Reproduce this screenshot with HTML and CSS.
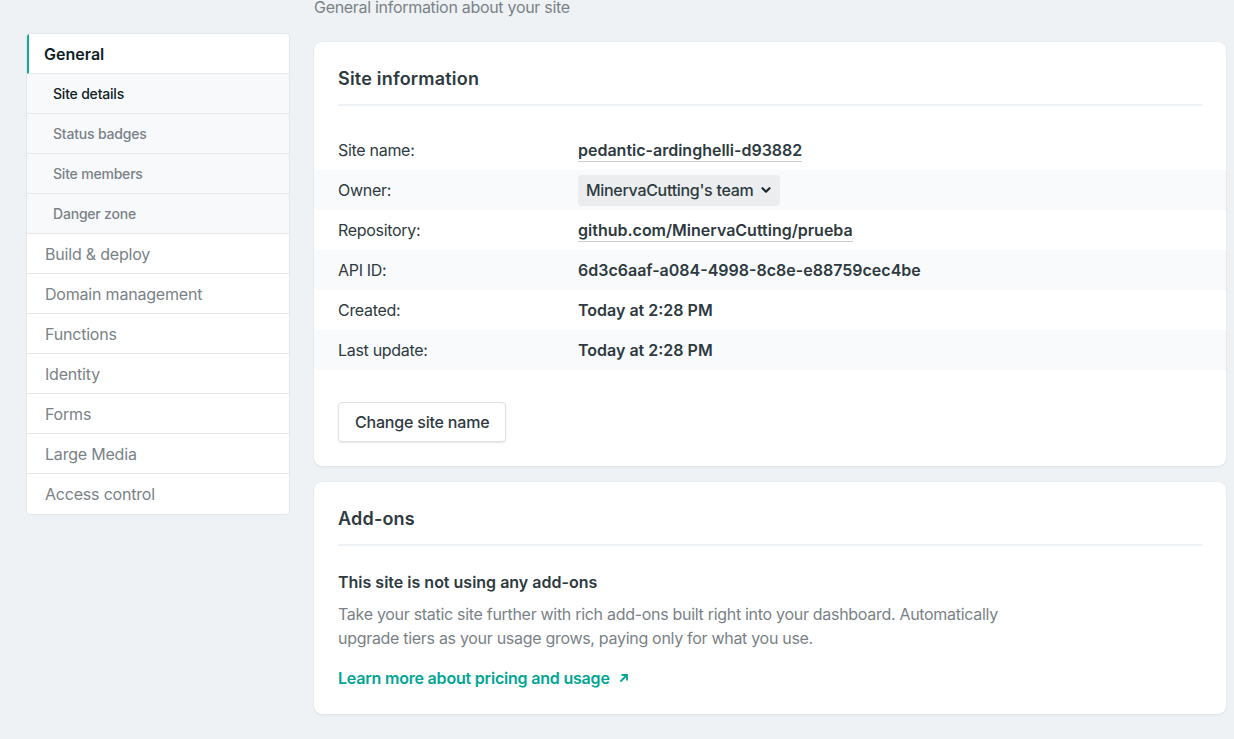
FILE: index.html
```html
<!DOCTYPE html>
<html lang="en">
<head>
<meta charset="utf-8">
<title>Site details</title>
<link rel="stylesheet" href="styles.css">
</head>
<body>
<div class="page">
  <nav class="sidebar">
    <a class="nav-item nav-active">General</a>
    <a class="nav-sub nav-sub-active">Site details</a>
    <a class="nav-sub">Status badges</a>
    <a class="nav-sub">Site members</a>
    <a class="nav-sub">Danger zone</a>
    <a class="nav-item">Build &amp; deploy</a>
    <a class="nav-item">Domain management</a>
    <a class="nav-item">Functions</a>
    <a class="nav-item">Identity</a>
    <a class="nav-item">Forms</a>
    <a class="nav-item">Large Media</a>
    <a class="nav-item nav-last">Access control</a>
  </nav>
  <main class="main">
    <p class="subtitle">General information about your site</p>
    <section class="card">
      <h2 class="card-title">Site information</h2>
      <dl class="info">
        <div class="info-row"><dt>Site name:</dt><dd><span class="ulink">pedantic-ardinghelli-d93882</span></dd></div>
        <div class="info-row shaded"><dt>Owner:</dt><dd><span class="select">MinervaCutting's team <svg class="chev" width="12" height="12" viewBox="0 0 12 12"><path d="M2.5 4.2 L6 7.7 L9.5 4.2" fill="none" stroke="#1f2a30" stroke-width="2.2" stroke-linecap="round" stroke-linejoin="round"/></svg></span></dd></div>
        <div class="info-row"><dt>Repository:</dt><dd><span class="ulink">github.com/MinervaCutting/prueba</span></dd></div>
        <div class="info-row shaded"><dt>API ID:</dt><dd>6d3c6aaf-a084-4998-8c8e-e88759cec4be</dd></div>
        <div class="info-row"><dt>Created:</dt><dd>Today at 2:28 PM</dd></div>
        <div class="info-row shaded"><dt>Last update:</dt><dd>Today at 2:28 PM</dd></div>
      </dl>
      <div class="actions"><button class="btn">Change site name</button></div>
    </section>
    <section class="card card-addons">
      <h2 class="card-title">Add-ons</h2>
      <h3 class="addons-title">This site is not using any add-ons</h3>
      <p class="addons-text">Take your static site further with rich add-ons built right into your dashboard. Automatically upgrade tiers as your usage grows, paying only for what you use.</p>
      <a class="learn">Learn more about pricing and usage <svg class="arrow" width="12" height="12" viewBox="0 0 12 12"><path d="M3 9 L8.5 3.5 M4.5 3 H9 V7.5" fill="none" stroke="currentColor" stroke-width="1.8" stroke-linecap="square"/></svg></a>
    </section>
  </main>
</div>
</body>
</html>
```

FILE: styles.css
```css
* { box-sizing: border-box; }
html, body { margin: 0; padding: 0; }
body {
  background: #eff2f5;
  font-family: Inter, "Noto Sans", "Liberation Sans", sans-serif;
  color: #2e3a40;
  font-size: 16px;
  line-height: 24px;
  height: 739px;
  overflow: hidden;
}
.page {
  display: flex;
  align-items: flex-start;
  gap: 24px;
  padding-left: 26px;
  padding-right: 8px;
}
.sidebar {
  width: 264px;
  flex: none;
  margin-top: 33px;
  background: #fff;
  border: 1px solid #e4e7ea;
  border-radius: 4px;
  display: flex;
  flex-direction: column;
  overflow: hidden;
}
.nav-item, .nav-sub {
  display: flex;
  align-items: center;
  height: 40px;
  border-bottom: 1px solid #e6e9ec;
  color: #7a8287;
  text-decoration: none;
  letter-spacing: -0.2px;
}
.nav-item {
  padding-left: 18px;
  font-size: 16px;
}
.nav-active {
  color: #0e1e25;
  font-weight: 600;
  border-left: 3px solid #15a99a;
  padding-left: 15px;
  margin-left: -1px;
  letter-spacing: 0;
}
.nav-sub {
  padding-left: 26px;
  font-size: 14px;
  background: #f8f9fa;
  font-weight: 500;
}
.nav-sub-active { color: #0e1e25; }
.nav-last { border-bottom: none; }
.main {
  flex: 1;
  display: flex;
  flex-direction: column;
  gap: 16px;
}
.subtitle {
  margin: -5px 0 7px;
  color: #7a8287;
  font-size: 16px;
  line-height: 24px;
  letter-spacing: -0.3px;
}
.card {
  background: #fff;
  border-radius: 8px;
  box-shadow: 0 1px 2px rgba(14, 30, 37, 0.08), 0 0 1px rgba(14, 30, 37, 0.1);
  padding: 24px 0 24px;
}
.card-title {
  margin: 0 24px;
  padding: 1px 0 13px;
  font-size: 18px;
  line-height: 24px;
  font-weight: 600;
  color: #2e3a40;
  letter-spacing: 0.2px;
  border-bottom: 2px solid #eff2f5;
}
.info { margin: 24px 0 0; }
.info-row {
  display: flex;
  align-items: center;
  height: 40px;
  padding: 0 24px;
}
.info-row.shaded { background: #f9fafb; }
.info-row dt {
  width: 240px;
  flex: none;
  color: #2e3a40;
  letter-spacing: -0.3px;
}
.info-row dd {
  margin: 0;
  font-weight: 600;
  color: #2e3a40;
}
.ulink {
  border-bottom: 1px solid #c9cdd0;
  padding-bottom: 1px;
}
.select {
  display: inline-flex;
  align-items: center;
  gap: 7px;
  height: 31px;
  padding: 0 8px;
  background: #ebedef;
  border-radius: 4px;
  font-weight: 500;
  letter-spacing: -0.3px;
}
.chev { display: block; }
.actions { padding: 32px 24px 0; }
.btn {
  font-family: inherit;
  font-size: 16px;
  font-weight: 500;
  color: #2e3a40;
  background: #fff;
  border: 1px solid #dfe2e5;
  border-radius: 4px;
  box-shadow: 0 1px 2px rgba(14, 30, 37, 0.1);
  height: 40px;
  padding: 0 16px;
  letter-spacing: -0.2px;
  cursor: pointer;
}
.card-addons { padding-bottom: 24px; }
.addons-title {
  margin: 24px 24px 0;
  font-size: 16px;
  line-height: 24px;
  font-weight: 600;
  color: #2e3a40;
}
.addons-text {
  margin: 8px 24px 0;
  max-width: 680px;
  color: #7a8287;
  line-height: 24px;
  letter-spacing: -0.3px;
}
.learn {
  display: inline-flex;
  align-items: center;
  gap: 8px;
  margin: 16px 24px 0;
  color: #00a693;
  font-weight: 600;
  text-decoration: none;
  letter-spacing: -0.2px;
}
.arrow { display: block; }
```
